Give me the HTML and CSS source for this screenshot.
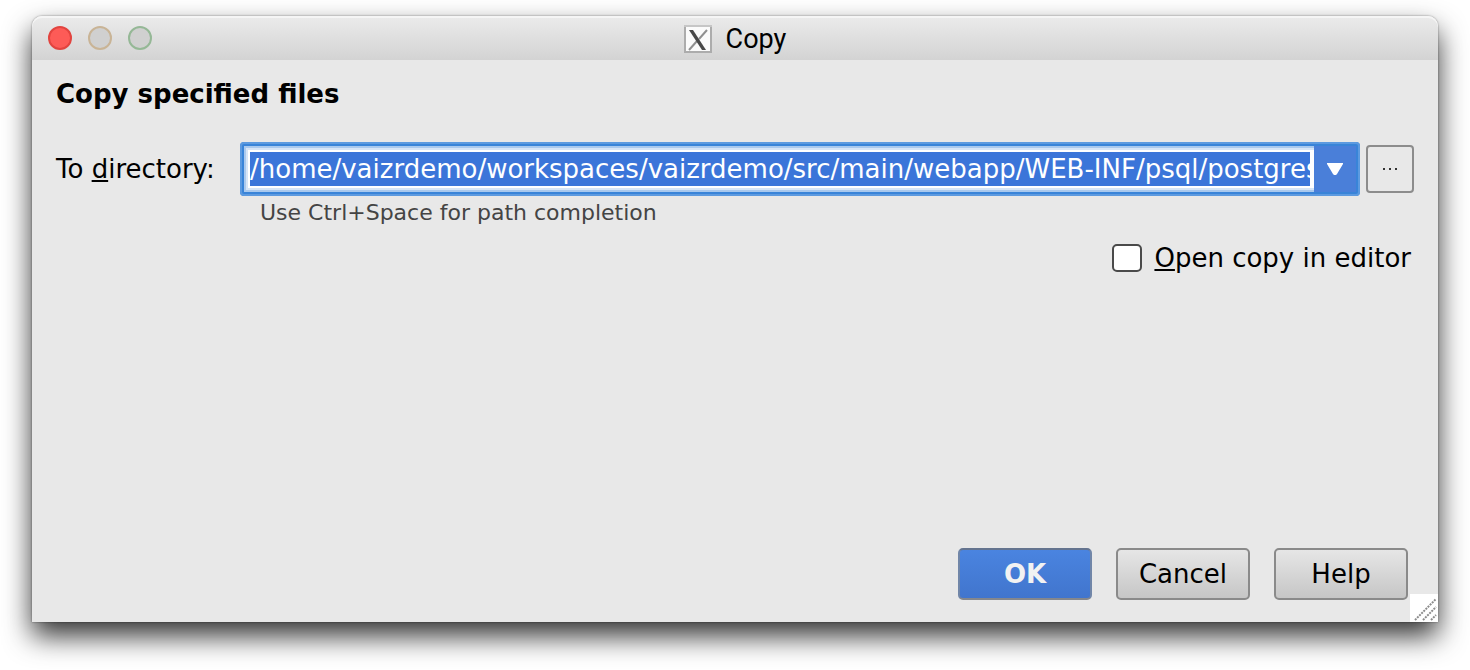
FILE: index.html
```html
<!DOCTYPE html>
<html lang="en">
<head>
<meta charset="utf-8">
<title>Copy</title>
<link rel="stylesheet" href="styles.css">
</head>
<body>
<main class="window">
  <header class="titlebar">
    <div class="lights">
      <button class="light light-close" type="button" aria-label="Close"></button>
      <button class="light light-min" type="button" aria-label="Minimize"></button>
      <button class="light light-max" type="button" aria-label="Zoom"></button>
    </div>
    <div class="title">
      <svg class="title-icon" viewBox="0 0 28 28" aria-hidden="true">
        <rect x="1" y="1" width="26" height="26" fill="#fbfbfb" stroke="#acacac" stroke-width="2"/>
        <path d="M0 1h28" stroke="#c6c6c6" stroke-width="2"/>
        <path d="M23 5 15 14M13 16 5 25" stroke="#909090" stroke-width="2" fill="none"/>
        <path d="M5 5h4l13 20h-4z" fill="#484848"/>
      </svg>
      <span>Copy</span>
    </div>
  </header>
  <form class="body">
    <h1 class="heading">Copy specified files</h1>
    <div class="row">
      <label class="label" for="dir">To <u>d</u>irectory:</label>
      <div class="combo">
        <div class="field"><input class="input" id="dir" type="text" value="/home/vaizrdemo/workspaces/vaizrdemo/src/main/webapp/WEB-INF/psql/postgres"></div>
        <button class="arrow" type="button" aria-label="Recent directories"><svg width="16" height="12" viewBox="0 0 16 12"><path d="M0 0h16v1L10 11l-1 1H7l-1-1L0 1z" fill="#fff"/></svg></button>
      </div>
      <button class="browse" type="button" aria-label="Browse"><svg width="16" height="2" viewBox="0 0 16 2"><path d="M1 0h2v2H1zM7 0h2v2H7zM13 0h2v2h-2z" fill="#333"/></svg></button>
    </div>
    <p class="hint">Use Ctrl+Space for path completion</p>
    <label class="check"><input class="box" type="checkbox"><span><u>O</u>pen copy in editor</span></label>
    <footer class="actions">
      <button class="btn btn-primary" type="button">OK</button>
      <button class="btn" type="button">Cancel</button>
      <button class="btn" type="button">Help</button>
    </footer>
  </form>
  <svg class="grip" viewBox="0 0 28 28" aria-hidden="true">
    <path d="M5 26 26 5M13 26 26 13M21 26l5-5" stroke="#8c8c8c" stroke-width="2" stroke-dasharray="2 1" fill="none"/>
  </svg>
</main>
</body>
</html>
```

FILE: styles.css
```css
* { box-sizing: border-box; }

body {
  margin: 0;
  min-height: 100vh;
  padding: 16px 32px 48px;
  display: flex;
  background: #fff;
  color: #000;
  font-family: "DejaVu Sans", sans-serif;
  font-size: 26px;
  line-height: 28px;
}

button, input { font: inherit; color: inherit; margin: 0; padding: 0; }

.window {
  position: relative;
  flex: 1;
  display: flex;
  flex-direction: column;
  background: #e8e8e8;
  border-radius: 10px 10px 0 0;
  box-shadow: 0 0 2px rgba(0, 0, 0, 0.5), 0 14px 28px rgba(0, 0, 0, 0.8);
}

.titlebar {
  position: relative;
  display: flex;
  align-items: center;
  justify-content: center;
  height: 44px;
  border-radius: 10px 10px 0 0;
  background: linear-gradient(#ebebeb, #d3d3d3);
  box-shadow: inset 0 2px 0 #f5f5f5;
}

.lights { position: absolute; left: 16px; display: flex; gap: 16px; }

.light {
  width: 24px;
  height: 24px;
  border: 2px solid;
  border-radius: 50%;
  background: #d0d0d0;
}
.light-close { background: #fd5b57; border-color: #e2443f; }
.light-min { border-color: #c9b496; }
.light-max { border-color: #95b896; }

.title {
  display: flex;
  align-items: center;
  gap: 14px;
  padding-top: 2px;
  font-family: Roboto, "Liberation Sans", sans-serif;
  font-size: 27px;
}
.title-icon { width: 28px; height: 28px; }

.body {
  flex: 1;
  display: flex;
  flex-direction: column;
  padding: 20px 24px 22px;
}

.heading { margin: 0 0 34px; font-size: 26px; line-height: 28px; font-weight: bold; }

.row { display: flex; align-items: center; }
.label { width: 184px; }

u { text-decoration-thickness: 2px; text-underline-offset: 2px; text-decoration-skip-ink: none; }

.combo {
  flex: 1;
  min-width: 0;
  height: 54px;
  display: flex;
  border: 4px solid #3984d8;
  border-radius: 4px;
  background: #4a7fd9;
  outline: 2px solid #5c9ae0;
  outline-offset: -2px;
}
.field {
  flex: 1;
  min-width: 0;
  padding: 6px 4px 6px 6px;
  background: #fff;
  box-shadow: inset 0 2px #a9c9ee, inset 2px -2px #a9c9ee, inset 0 4px #d6e5f7, inset 4px -4px #d6e5f7;
}
.input {
  display: block;
  width: 100%;
  height: 100%;
  border: 0;
  outline: 0;
  background: #3b75d9;
  color: #fff;
}
.arrow {
  width: 42px;
  border: 0;
  background: #4a7fd9;
  display: flex;
  align-items: center;
  justify-content: center;
}
.browse {
  width: 48px;
  height: 48px;
  margin-left: 6px;
  border: 2px solid #8c8c8c;
  border-radius: 4px;
  background: #e8e8e8;
  display: flex;
  align-items: center;
  justify-content: center;
}

.hint { margin: 2px 0 0 204px; font-size: 22px; line-height: 30px; color: #444; }

.check {
  align-self: flex-end;
  display: flex;
  align-items: center;
  gap: 12px;
  margin: 16px 3px 0 0;
}
.box {
  appearance: none;
  width: 30px;
  height: 28px;
  border: 2px solid #4a4a4a;
  border-radius: 5px;
  background: #fff;
}

.actions { margin-top: auto; display: flex; justify-content: flex-end; gap: 24px; padding-right: 6px; }

.btn {
  width: 134px;
  height: 52px;
  border: 2px solid #8a8a8a;
  border-radius: 5px;
  background: linear-gradient(#e6e6e6, #c6c6c6);
}
.btn-primary {
  border-color: #64748f #7186a8 #85878c;
  background: linear-gradient(#4a84e0, #4175cd);
  color: #f2f2f2;
  font-weight: bold;
}

.grip {
  position: absolute;
  right: 0;
  bottom: 0;
  width: 28px;
  height: 28px;
  background: #fff;
}
```
